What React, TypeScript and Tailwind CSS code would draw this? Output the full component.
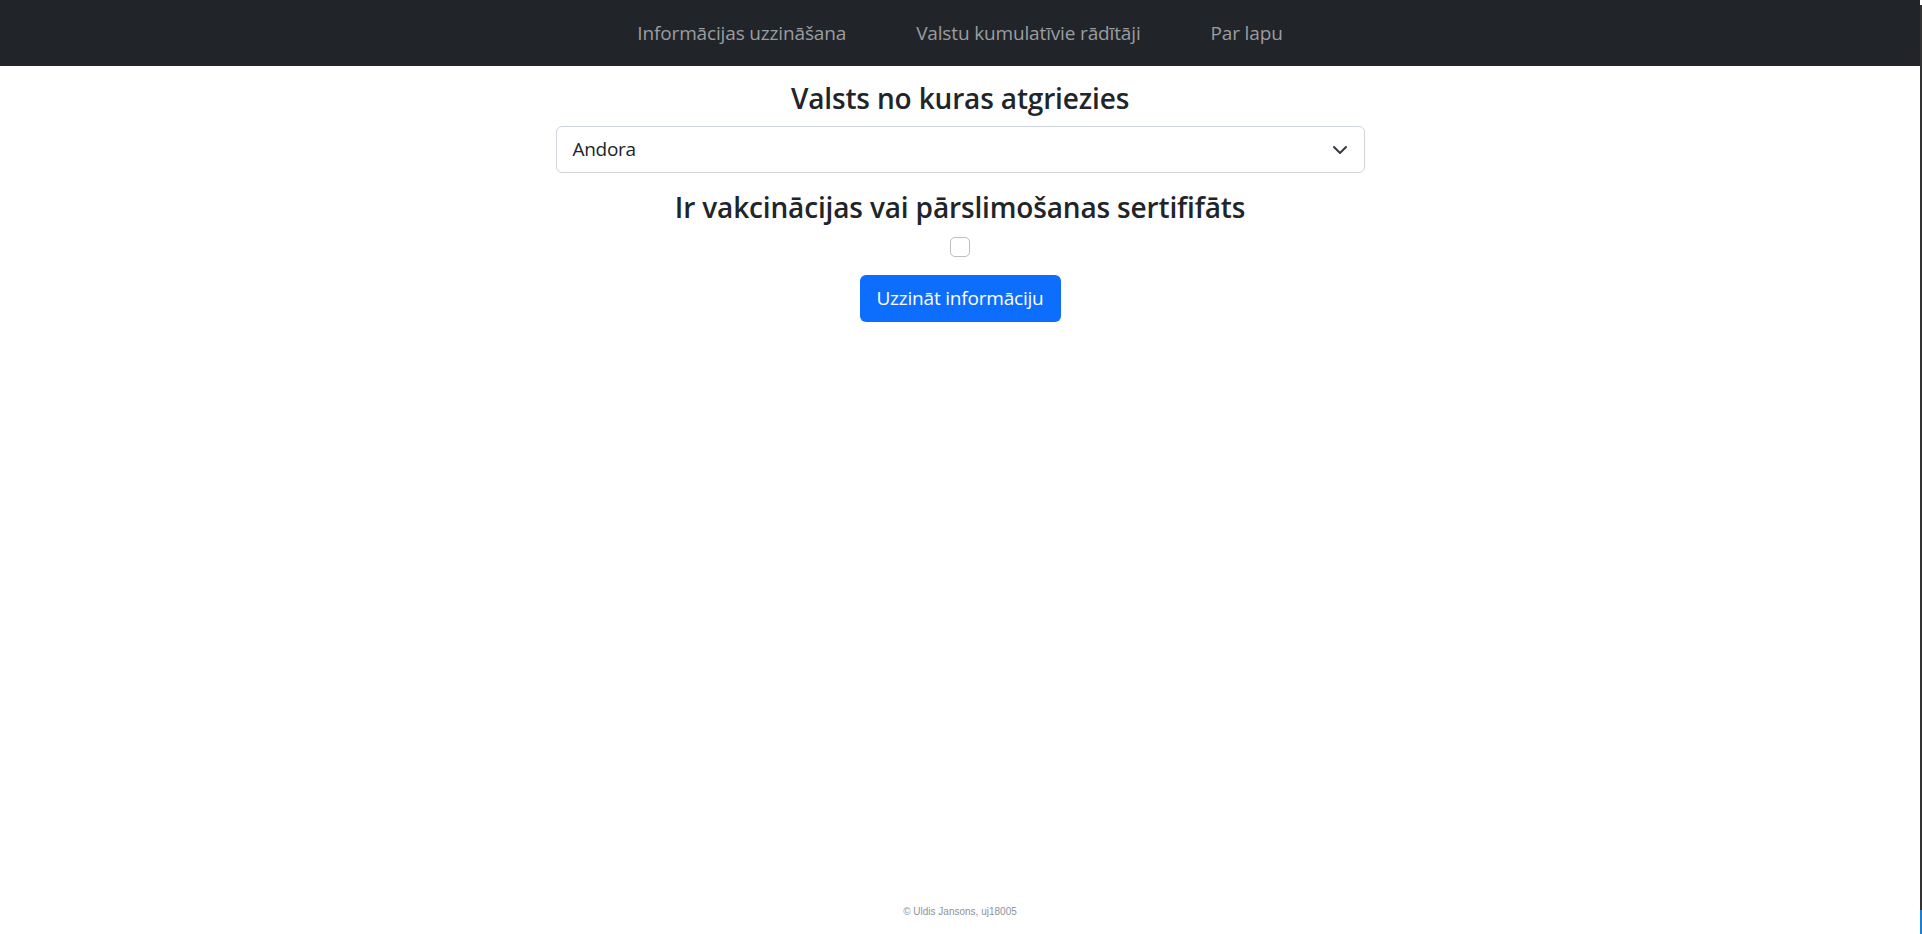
import { useState } from "react";

const navLinks = ["Informācijas uzzināšana", "Valstu kumulatīvie rādītāji", "Par lapu"];

const ChevronDown = () => (
  <svg width="16" height="16" viewBox="0 0 16 16" fill="none" stroke="#343a40" strokeWidth="2" strokeLinecap="round" strokeLinejoin="round">
    <path d="m2 5 6 6 6-6" />
  </svg>
);

export default function App() {
  const [country] = useState("Andora");
  const [hasCert, setHasCert] = useState(false);

  return (
    <div className="flex min-h-screen bg-white font-['Open_Sans','Noto_Sans',sans-serif]">
      <div className="flex flex-1 flex-col">
        <nav className="h-[66px] bg-[#212529] flex items-center justify-center gap-[70px]">
          {navLinks.map((label) => (
            <a key={label} href="#" className="text-[19px] tracking-[-0.15px] text-[#9a9da0] hover:text-white">
              {label}
            </a>
          ))}
        </nav>

        <main className="flex flex-col items-center">
          <h2 className="mt-[14px] h-[36px] leading-[36px] text-[28px] font-semibold tracking-[-0.15px] text-[#212529]">
            Valsts no kuras atgriezies
          </h2>
          <div className="mt-[10px] w-[809px] h-[47px] border border-[#ced4da] rounded-[6px] flex items-center justify-between pl-[16px] pr-[16px]">
            <span className="text-[19px] tracking-[-0.3px] text-[#212529]">{country}</span>
            <ChevronDown />
          </div>

          <h2 className="mt-[16px] h-[36px] leading-[36px] text-[28px] font-semibold tracking-[-0.15px] text-[#212529]">
            Ir vakcinācijas vai pārslimošanas sertififāts
          </h2>
          <input
            type="checkbox"
            checked={hasCert}
            onChange={(e) => setHasCert(e.target.checked)}
            className="mt-[12px] w-[20px] h-[20px] appearance-none border border-[#bfbfbf] rounded-[5px] bg-white checked:bg-[#0d6efd]"
          />
          <button className="mt-[18px] w-[201px] h-[47px] bg-[#0d6efd] rounded-[6px] text-white text-[19px] tracking-[-0.2px]">
            Uzzināt informāciju
          </button>
        </main>

        <footer className="mt-auto pb-[16px] flex justify-center">
          <p className="font-['Liberation_Sans',Arial,sans-serif] text-[10px] leading-[12px] text-[#8c939b]">
            © Uldis Jansons, uj18005
          </p>
        </footer>
      </div>

      <div className="w-[2px] flex flex-col">
        <div className="h-[5px] bg-white" />
        <div className="flex-1 bg-[#333333]" />
        <div className="h-[24px] bg-[#1a7fd4]" />
      </div>
    </div>
  );
}
